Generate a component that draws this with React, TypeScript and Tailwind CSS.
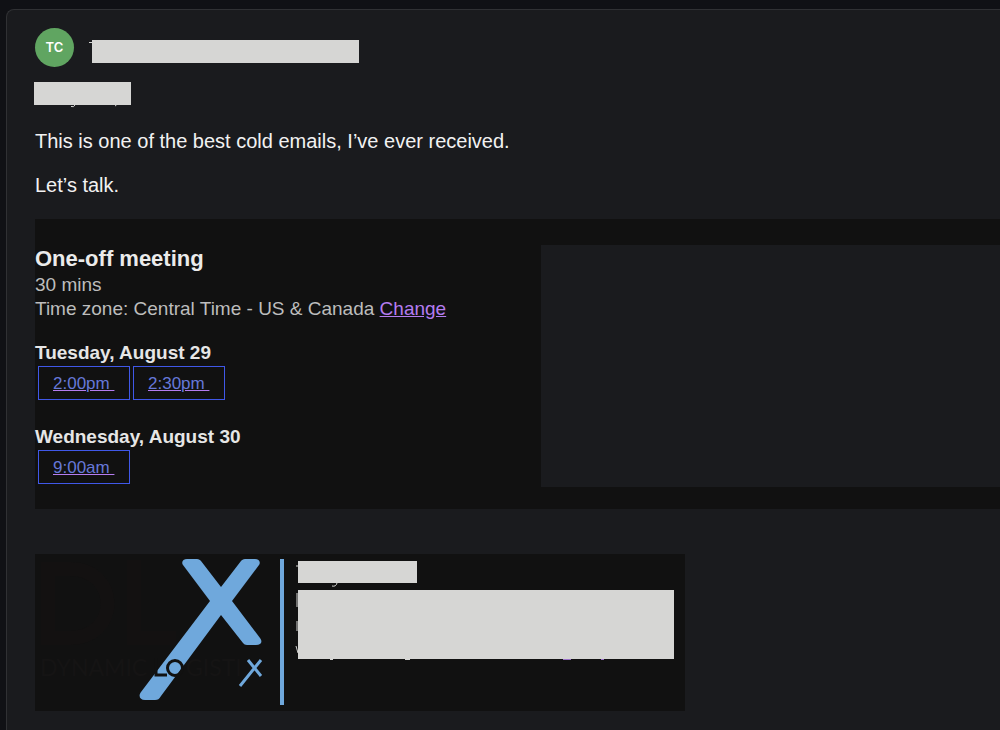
import type { ReactNode } from "react";

function Redaction({ className, children }: { className: string; children?: ReactNode }) {
  return (
    <div className={`relative bg-[#d6d6d4] ${className}`} aria-hidden="true">
      {children}
    </div>
  );
}

function Slot({ time }: { time: string }) {
  return (
    <a
      href="#book"
      className="flex h-[34px] w-[92px] items-center border border-[#4058e8] pt-0.5 pl-[14px] text-[17px] leading-6 whitespace-pre text-[#6678d8] underline decoration-[#b47cf0]"
    >
      {time + " "}
    </a>
  );
}

function Day({ label, times }: { label: string; times: string[] }) {
  return (
    <section>
      <h3 className="text-[19px] leading-6 font-bold text-[#e6e6e6]">{label}</h3>
      <div className="mt-px flex gap-[3px] pl-[3px]">
        {times.map((time) => (
          <Slot key={time} time={time} />
        ))}
      </div>
    </section>
  );
}

function Logo() {
  return (
    <svg
      viewBox="0 0 232 148"
      className="h-[148px] w-[232px] shrink-0"
      role="img"
      aria-label="DLX Dynamic Logistix"
      fontFamily="Lato, sans-serif"
    >
      <g fill="none" stroke="#131111" strokeWidth="14">
        <path d="M11 10h22c50 0 50 69 0 69H11z" />
        <path d="M97 1v78h42" />
      </g>
      <g fill="#6fa8dc">
        <path d="M146 6c-2-3 0-6 4-6h10c2 0 3 1 4 2l20 26 20-26c1-1 2-2 4-2h10c4 0 6 3 4 6l-27 36 28 37c3 4 1 7-4 7h-9c-2 0-3-1-4-2l-22-28-60 81c-2 3-3 4-6 4h-10c-5 0-7-4-4-8l69-91z" />
      </g>
      <path d="m211 101 13 16m0-16-21 26" fill="none" stroke="#6fa8dc" strokeWidth="3" />
      <g fill="none" stroke="#111111" strokeWidth="3">
        <path d="M119 99v17h11" />
        <circle cx="138" cy="109" r="7.5" />
      </g>
      <g fill="#151414" fontSize="23">
        <text x="3" y="117">DYNAMIC</text>
        <text x="149" y="117">GISTI</text>
      </g>
    </svg>
  );
}

export default function App() {
  return (
    <div className="flex min-h-screen overflow-hidden bg-[#101115] pt-[9px] pl-[6px] font-['Liberation_Sans',Arial,sans-serif]">
      <main className="min-w-0 flex-1 rounded-tl-lg border-t border-l border-[#303134] bg-[#1a1b1e] pt-[18px] pb-[19px] pl-7">
        <header className="flex">
          <div className="flex size-[39px] items-center justify-center rounded-full bg-[#60a561] font-[Inter,sans-serif] text-[13px] font-semibold text-white">
            TC
          </div>
          <Redaction className="mt-3 ml-[18px] h-[23px] w-[267px]">
            <svg className="absolute top-0.5 -left-[3px]" width="3" height="2">
              <path d="M0 0h3v1H0z" fill="#d6d6d4" />
            </svg>
          </Redaction>
        </header>

        <Redaction className="mt-[15px] -ml-px h-[23px] w-[97px]">
          <svg className="absolute top-full left-0" width="97" height="3">
            <path d="M37 1.5q3 1 4-1.500M81 1l1.500-1" stroke="#d6d6d4" fill="none" />
          </svg>
        </Redaction>

        <div className="mt-6 flex flex-col gap-5 text-xl leading-6 text-[#f2f2f2]">
          <p>This is one of the best cold emails, I’ve ever received.</p>
          <p>Let’s talk.</p>
        </div>

        <section className="mt-[22px] grid grid-cols-[506fr_459fr] bg-[#111111] pt-[26px] pb-[22px]">
          <div>
            <h2 className="text-[22px] leading-7 font-bold text-[#ebebeb]">One-off meeting</h2>
            <div className="text-[19px] leading-6 text-[#bdbdbd]">
              <p>30 mins</p>
              <p>
                Time zone: Central Time - US &amp; Canada{" "}
                <a href="#change" className="text-[#b47cf0] underline">
                  Change
                </a>
              </p>
            </div>
            <div className="mt-5 flex flex-col gap-[25px]">
              <Day label="Tuesday, August 29" times={["2:00pm", "2:30pm"]} />
              <Day label="Wednesday, August 30" times={["9:00am"]} />
            </div>
          </div>
          <div className="h-[242px] bg-[#1a1b1e]" />
        </section>

        <footer className="mt-[45px] flex h-[157px] max-w-[650px] bg-[#111111] pt-[5px] pl-0.5">
          <Logo />
          <div className="ml-[11px] h-[146px] w-1 shrink-0 bg-[#6fa8dc]" />
          <div className="mt-0.5 ml-[14px]">
            <Redaction className="h-[22px] w-[119px]">
              <svg className="absolute top-0 -left-0.5 overflow-visible" width="119" height="26">
                <path d="M0 5h2M36 25q4 1 5-3" stroke="#d6d6d4" fill="none" />
              </svg>
            </Redaction>
            <Redaction className="mt-[7px] h-[69px] w-[376px]">
              <svg className="absolute top-0 -left-0.5 overflow-visible" width="378" height="71">
                <path d="M1 3v14M1 31v10M0 56l2 7M34 69.500h3M109 69.500h5" stroke="#d6d6d4" fill="none" />
                <path d="M267 69.500h8M305 69.500h3" stroke="#9b72c8" />
              </svg>
            </Redaction>
          </div>
        </footer>
      </main>
    </div>
  );
}
